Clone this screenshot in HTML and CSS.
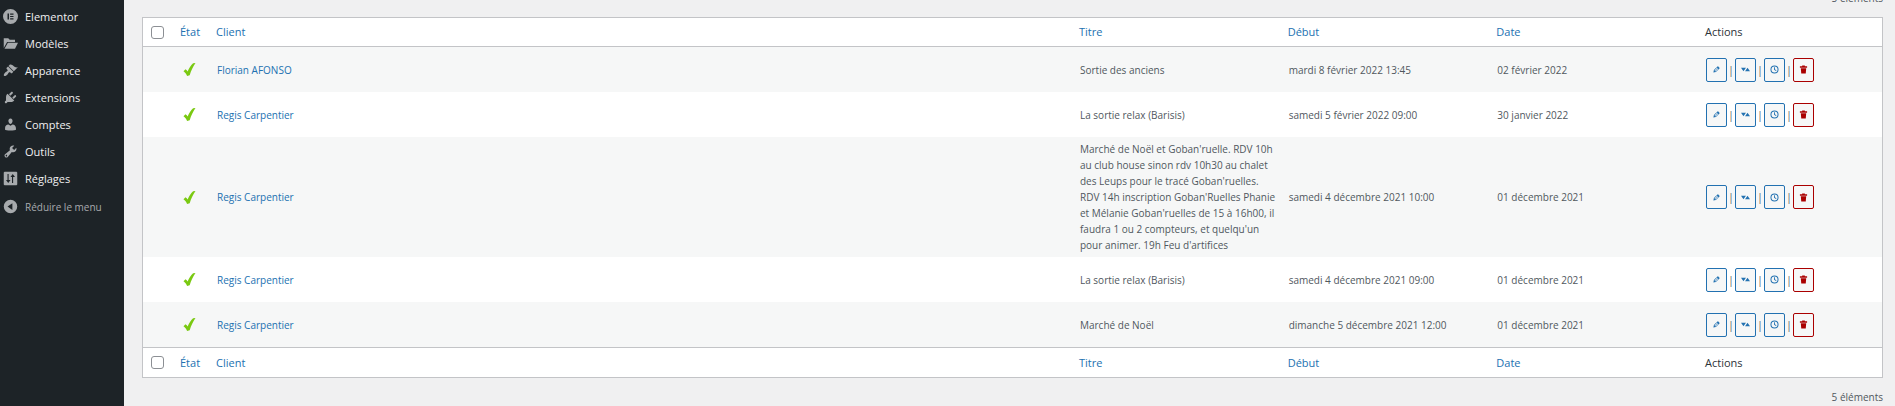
FILE: index.html
```
<!DOCTYPE html>
<html lang="fr">
<head>
<meta charset="utf-8">
<title>Événements</title>
<link rel="stylesheet" href="styles.css">
</head>
<body>
<svg class="sprite" aria-hidden="true">
  <symbol id="i-check" viewBox="0 0 12 13"><path fill="#7ac911" d="M0 8.300 2 6.200c1 .7 1.600 1.300 2.100 2.200C5.600 4.800 7.600 2 9.600.2L12 0C9.600 3.500 7.600 7.500 6.200 12.300L3.600 13C2.800 11.100 1.600 9.500 0 8.300z"/></symbol>
  <symbol id="i-edit" viewBox="0 0 20 20"><path d="M13.890 3.390l2.710 2.720c.46.46.42 1.240.03 1.640l-8.010 8.020-5.560 1.160 1.160-5.580s7.600-7.630 7.990-8.030c.39-.39 1.220-.39 1.680.07zm-2.730 2.790l-5.590 5.610 1.110 1.110 5.540-5.650zm-2.970 8.230l5.580-5.600-1.070-1.080-5.590 5.600z"/></symbol>
  <symbol id="i-sort" viewBox="0 0 20 20"><path d="M0 6h11l-5.500 8zM9 14h11l-5.500-8z"/></symbol>
  <symbol id="i-clock" viewBox="0 0 20 20"><path d="M10 1a9 9 0 1 1 0 18 9 9 0 0 1 0-18zm0 2.200a6.800 6.800 0 1 0 0 13.600 6.800 6.800 0 0 0 0-13.600zM9 5h2v4.600l3.500 2.400-1.200 1.600L9 10.700z"/></symbol>
  <symbol id="i-trash" viewBox="0 0 20 20"><path d="M7 1h6v1.500h5V6H2V2.500h5zM4 7h12l-1 12H5z"/></symbol>
</svg>
<div class="layout">
  <nav class="menu" aria-label="Menu principal">
    <ul class="menu-list">
      <li><a class="menu-link" href="#"><svg class="menu-icon" viewBox="0 0 20 20"><path fill-rule="evenodd" d="M10 0a10 10 0 1 1 0 20 10 10 0 0 1 0-20zM6 6v8h2V6zm3.500 0v1.600H14V6zm0 3.200v1.600H14V9.200zm0 3.200V14H14v-1.600z"/></svg>Elementor</a></li>
      <li><a class="menu-link" href="#"><svg class="menu-icon" viewBox="0 0 20 20"><path d="M1 16V3h6l2 2h7v3H5.500zM2 17l4.500-8H20l-4 8z"/></svg>Modèles</a></li>
      <li><a class="menu-link" href="#"><svg class="menu-icon" viewBox="0 0 20 20"><path d="M14.480 11.060L7.410 3.990l1.500-1.500c.5-.56 2.300-.47 3.510.32 1.210.8 1.430 1.280 2.910 2.100 1.180.64 2.450 1.260 4.450.85zm-.71.71L6.700 4.700 4.930 6.470c-.39.39-.39 1.020 0 1.410l1.060 1.060c.39.39.39 1.030 0 1.420-.6.6-1.430 1.110-2.210 1.690-.35.26-.7.53-1.010.84C1.430 14.230.4 16.080 1.400 17.070c.99 1 2.840-.03 4.180-1.360.31-.31.58-.66.85-1.020.57-.78 1.080-1.610 1.690-2.210.39-.39 1.020-.39 1.410 0l1.060 1.060c.39.39 1.020.39 1.410 0z"/></svg>Apparence</a></li>
      <li><a class="menu-link" href="#"><svg class="menu-icon" viewBox="0 0 20 20"><path d="M13.110 4.360L9.870 7.600 8 5.730l3.240-3.240c.35-.34 1.050-.2 1.560.32.52.51.66 1.210.31 1.550zm-8 1.770l.91-1.120 9.010 9.010-1.190.84c-.71.71-2.630 1.160-3.820 1.160H6.140L4.900 17.260c-.59.59-1.540.59-2.120 0-.59-.58-.59-1.530 0-2.120l1.240-1.240v-3.880c0-1.130.4-3.190 1.090-3.890zm7.260 3.970l3.240-3.240c.34-.35 1.040-.21 1.550.31.52.51.66 1.210.31 1.550l-3.240 3.250z"/></svg>Extensions</a></li>
      <li><a class="menu-link" href="#"><svg class="menu-icon" viewBox="0 0 20 20"><path d="M10 9.250c-2.270 0-2.730-3.440-2.730-3.440C7 4.020 7.820 2 9.970 2c2.160 0 2.980 2.020 2.710 3.810 0 0-.41 3.440-2.680 3.440zm0 2.570L12.720 10c2.390 0 4.520 2.330 4.520 4.530v2.490s-3.650 1.130-7.240 1.130c-3.650 0-7.240-1.130-7.240-1.130v-2.490c0-2.250 1.940-4.480 4.470-4.480z"/></svg>Comptes</a></li>
      <li><a class="menu-link" href="#"><svg class="menu-icon" viewBox="0 0 20 20"><path d="M16.680 9.770c-1.340 1.340-3.300 1.670-4.950.99l-5.410 6.520c-.99.99-2.590.99-3.580 0s-.99-2.590 0-3.570l6.520-5.420c-.68-1.650-.35-3.610.99-4.950 1.280-1.280 3.120-1.620 4.720-1.060l-2.890 2.890 2.820 2.820 2.860-2.870c.53 1.580.18 3.390-1.080 4.650zM3.810 16.210c.4.390 1.040.39 1.430 0 .4-.4.4-1.040 0-1.430-.39-.4-1.030-.4-1.430 0-.39.39-.39 1.030 0 1.430z"/></svg>Outils</a></li>
      <li><a class="menu-link" href="#"><svg class="menu-icon" viewBox="0 0 20 20"><path fill-rule="evenodd" d="M2 1h16l1 1v16l-1 1H2l-1-1V2zM6 4v8H4l3 4 3-4H7.500V4zM13 4l-3 4h2v8h1.500V8h2.500z"/></svg>Réglages</a></li>
    </ul>
    <button class="menu-collapse" type="button"><svg class="menu-icon" viewBox="0 0 20 20"><path fill-rule="evenodd" d="M10 1a9 9 0 1 1 0 18 9 9 0 0 1 0-18zM12.500 5.500L6 10l6.500 4.500z"/></svg>Réduire le menu</button>
  </nav>
  <main class="content">
    <div class="tablenav"><span>5 éléments</span></div>
    <table class="list">
      <thead>
        <tr><th class="col-check"><input type="checkbox" aria-label="Tout sélectionner"></th><th class="col-state"><a href="#">État</a></th><th><a href="#">Client</a></th><th class="col-data"><a href="#">Titre</a></th><th class="col-data"><a href="#">Début</a></th><th class="col-data"><a href="#">Date</a></th><th class="col-actions">Actions</th></tr>
      </thead>
      <tbody>
        <tr><td></td><td><svg class="check" role="img" aria-label="Validé"><use href="#i-check"/></svg></td><td><a href="#">Florian AFONSO</a></td><td>Sortie des anciens</td><td>mardi 8 février 2022 13:45</td><td>02 février 2022</td>
          <td><div class="actions"><a class="action" href="#" aria-label="Modifier"><svg><use href="#i-edit"/></svg></a><span>|</span><a class="action" href="#" aria-label="Trier"><svg><use href="#i-sort"/></svg></a><span>|</span><a class="action" href="#" aria-label="Horaire"><svg><use href="#i-clock"/></svg></a><span>|</span><a class="action action-delete" href="#" aria-label="Supprimer"><svg><use href="#i-trash"/></svg></a></div></td></tr>
        <tr><td></td><td><svg class="check" role="img" aria-label="Validé"><use href="#i-check"/></svg></td><td><a href="#">Regis Carpentier</a></td><td>La sortie relax (Barisis)</td><td>samedi 5 février 2022 09:00</td><td>30 janvier 2022</td>
          <td><div class="actions"><a class="action" href="#" aria-label="Modifier"><svg><use href="#i-edit"/></svg></a><span>|</span><a class="action" href="#" aria-label="Trier"><svg><use href="#i-sort"/></svg></a><span>|</span><a class="action" href="#" aria-label="Horaire"><svg><use href="#i-clock"/></svg></a><span>|</span><a class="action action-delete" href="#" aria-label="Supprimer"><svg><use href="#i-trash"/></svg></a></div></td></tr>
        <tr><td></td><td><svg class="check" role="img" aria-label="Validé"><use href="#i-check"/></svg></td><td><a href="#">Regis Carpentier</a></td><td>Marché de Noël et Goban'ruelle. RDV 10h<br>au club house sinon rdv 10h30 au chalet<br>des Leups pour le tracé Goban'ruelles.<br>RDV 14h inscription Goban'Ruelles Phanie<br>et Mélanie Goban'ruelles de 15 à 16h00, il<br>faudra 1 ou 2 compteurs, et quelqu'un<br>pour animer. 19h Feu d'artifices</td><td>samedi 4 décembre 2021 10:00</td><td>01 décembre 2021</td>
          <td><div class="actions"><a class="action" href="#" aria-label="Modifier"><svg><use href="#i-edit"/></svg></a><span>|</span><a class="action" href="#" aria-label="Trier"><svg><use href="#i-sort"/></svg></a><span>|</span><a class="action" href="#" aria-label="Horaire"><svg><use href="#i-clock"/></svg></a><span>|</span><a class="action action-delete" href="#" aria-label="Supprimer"><svg><use href="#i-trash"/></svg></a></div></td></tr>
        <tr><td></td><td><svg class="check" role="img" aria-label="Validé"><use href="#i-check"/></svg></td><td><a href="#">Regis Carpentier</a></td><td>La sortie relax (Barisis)</td><td>samedi 4 décembre 2021 09:00</td><td>01 décembre 2021</td>
          <td><div class="actions"><a class="action" href="#" aria-label="Modifier"><svg><use href="#i-edit"/></svg></a><span>|</span><a class="action" href="#" aria-label="Trier"><svg><use href="#i-sort"/></svg></a><span>|</span><a class="action" href="#" aria-label="Horaire"><svg><use href="#i-clock"/></svg></a><span>|</span><a class="action action-delete" href="#" aria-label="Supprimer"><svg><use href="#i-trash"/></svg></a></div></td></tr>
        <tr><td></td><td><svg class="check" role="img" aria-label="Validé"><use href="#i-check"/></svg></td><td><a href="#">Regis Carpentier</a></td><td>Marché de Noël</td><td>dimanche 5 décembre 2021 12:00</td><td>01 décembre 2021</td>
          <td><div class="actions"><a class="action" href="#" aria-label="Modifier"><svg><use href="#i-edit"/></svg></a><span>|</span><a class="action" href="#" aria-label="Trier"><svg><use href="#i-sort"/></svg></a><span>|</span><a class="action" href="#" aria-label="Horaire"><svg><use href="#i-clock"/></svg></a><span>|</span><a class="action action-delete" href="#" aria-label="Supprimer"><svg><use href="#i-trash"/></svg></a></div></td></tr>
      </tbody>
      <tfoot>
        <tr><th><input type="checkbox" aria-label="Tout sélectionner"></th><th><a href="#">État</a></th><th><a href="#">Client</a></th><th><a href="#">Titre</a></th><th><a href="#">Début</a></th><th><a href="#">Date</a></th><th>Actions</th></tr>
      </tfoot>
    </table>
    <div class="tablenav tablenav-bottom"><span>5 éléments</span></div>
  </main>
</div>
</body>
</html>
```
FILE: styles.css
```
* { box-sizing: border-box; }

body {
  margin: 0;
  background: #f0f0f1;
  color: #50575e;
  font: 10px/16px "Open Sans", "Noto Sans", sans-serif;
  overflow: hidden;
}

a { color: #2271b1; text-decoration: none; }

.sprite { display: none; }

.layout { display: flex; min-height: 100vh; }

/* Admin menu */
.menu {
  flex: 0 0 124px;
  padding-top: 3px;
  background: #1d2327;
}

.menu-list { margin: 0; padding: 0; list-style: none; }

.menu-link,
.menu-collapse {
  display: flex;
  align-items: center;
  gap: 7px;
  width: 100%;
  height: 27px;
  padding: 0 3px;
  color: #f0f0f1;
  font-size: 11px;
  font-weight: 500;
}

.menu-collapse {
  margin-top: 1px;
  border: 0;
  background: none;
  color: #a7aaad;
  font-family: inherit;
  font-size: 10px;
  font-weight: 400;
}

.menu-icon { width: 15px; height: 15px; fill: #a7aaad; }

/* The page is scrolled slightly past the upper item count */
.content {
  flex: 1;
  min-width: 0;
  margin-top: -10px;
  padding: 0 12px 0 18px;
}

.tablenav {
  display: flex;
  justify-content: flex-end;
  height: 27px;
}

.tablenav-bottom { padding-top: 11px; }

/* List table */
.list {
  width: 100%;
  table-layout: fixed;
  border: 1px solid #c3c4c7;
  border-spacing: 0;
  background: #fff;
}

.col-check { width: 30px; }
.col-state { width: 36px; }
.col-data { width: 12%; }
.col-actions { width: 184px; }

th {
  height: 29px;
  padding: 0 7px;
  color: #2c3338;
  font-size: 11px;
  font-weight: 400;
  text-align: left;
  vertical-align: middle;
}

thead th { border-bottom: 1px solid #c3c4c7; }
tfoot th { height: 30px; border-top: 1px solid #c3c4c7; }

input[type="checkbox"] {
  display: block;
  width: 13px;
  height: 13px;
  margin: 0 0 0 1px;
  border: 1px solid #8c8f94;
  border-radius: 3px;
  background: #fff;
  appearance: none;
}

td {
  height: 45px;
  padding: 4px 0 4px 8px;
  vertical-align: middle;
}

tbody tr:nth-child(odd) { background: #f6f7f7; }

.check { display: block; width: 13px; height: 13px; margin-left: 2px; }

.actions { display: flex; align-items: center; }

.actions span { width: 8px; text-align: center; }

.action {
  display: flex;
  align-items: center;
  justify-content: center;
  width: 21px;
  height: 24px;
  border: 1px solid #2271b1;
  border-radius: 2px;
  background: #f6f7f7;
  fill: #2271b1;
}

.action svg { width: 9px; height: 9px; }

.action-delete { border-color: #a00; fill: #a00; }
```
